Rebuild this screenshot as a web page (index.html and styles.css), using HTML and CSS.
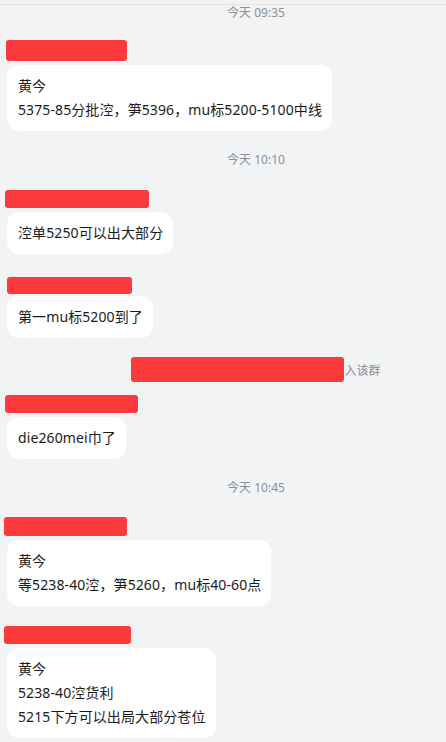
FILE: index.html
```html
<!DOCTYPE html>
<html lang="zh-CN">
<head>
  <meta charset="UTF-8" />
  <meta name="viewport" content="width=device-width, initial-scale=1.0" />
  <title>群聊</title>
  <link rel="stylesheet" href="styles.css">
</head>
<body>
  <div class="topbar"></div>
  <div class="chat">
    <div class="time">今天 09:35</div>

    <div class="msg">
      <div class="name" style="width:121px;height:21px;margin-top:-3px"></div>
      <div class="bubble">
        <p>黄今</p>
        <p>5375-85分批涳，笋5396，mu标5200-5100中线</p>
      </div>
    </div>

    <div class="time">今天 10:10</div>

    <div class="msg">
      <div class="name" style="width:144px;margin-left:5px"></div>
      <div class="bubble">
        <p>涳单5250可以出大部分</p>
      </div>
    </div>

    <div class="msg">
      <div class="name" style="width:125px;margin-left:7px;height:17px;margin-top:3px;margin-bottom:2px"></div>
      <div class="bubble">
        <p>第一mu标5200到了</p>
      </div>
    </div>

    <div class="sys">
      <span class="sys-name"></span>
      <span>入该群</span>
    </div>

    <div class="msg">
      <div class="name" style="width:133px;margin-left:5px"></div>
      <div class="bubble">
        <p>die260mei巾了</p>
      </div>
    </div>

    <div class="time">今天 10:45</div>

    <div class="msg">
      <div class="name" style="width:123px;margin-left:4px;height:19px;margin-top:-1px"></div>
      <div class="bubble">
        <p>黄今</p>
        <p>等5238-40涳，笋5260，mu标40-60点</p>
      </div>
    </div>

    <div class="msg">
      <div class="name" style="width:127px;margin-left:4px"></div>
      <div class="bubble">
        <p>黄今</p>
        <p>5238-40涳货利</p>
        <p>5215下方可以出局大部分苍位</p>
      </div>
    </div>
  </div>
</body>
</html>
```

FILE: styles.css
```css
body {
  margin: 0;
  padding: 0;
  background-color: #f2f3f5;
  font-family: "Noto Sans", "Noto Sans CJK SC", sans-serif;
  color: #1b1b1b;
  overflow: hidden;
}
.topbar {
  height: 4px;
  border-bottom: 1px solid #e1e3e7;
}
.chat {
  display: flex;
  flex-direction: column;
  align-items: flex-start;
}
.time {
  align-self: stretch;
  text-align: center;
  padding-left: 66px;
  font-size: 12px;
  line-height: 16px;
  color: #8b8f96;
  margin-top: 21px;
}
.chat > .time:first-child {
  margin-top: 0;
}
.msg {
  display: flex;
  flex-direction: column;
  align-items: flex-start;
  margin-top: 20px;
}
.time + .msg {
  margin-top: 22px;
}
.name {
  height: 18px;
  margin-left: 6px;
  margin-bottom: 4px;
  background-color: #fd3a3b;
  border-radius: 3px;
}
.bubble {
  margin-left: 7px;
  padding: 9px 10px 9px 11px;
  background-color: #fff;
  border-radius: 12px;
}
.bubble p {
  margin: 0;
  font-size: 14px;
  line-height: 24px;
  letter-spacing: 0.1px;
  white-space: nowrap;
}
.sys {
  align-self: stretch;
  display: flex;
  justify-content: center;
  align-items: center;
  padding-left: 66px;
  margin-top: 19px;
  font-size: 12px;
  color: #8b8f96;
}
.sys-name {
  width: 213px;
  height: 25px;
  background-color: #fd3a3b;
  border-radius: 3px;
}
.sys + .msg {
  margin-top: 13px;
}
```
